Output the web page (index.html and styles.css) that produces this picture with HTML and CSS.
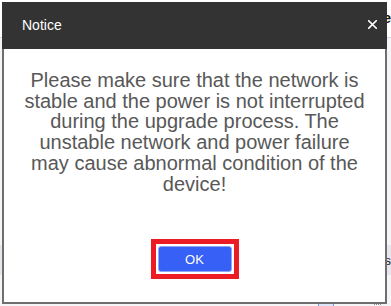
FILE: index.html
```html
<!DOCTYPE html>
<html lang="en">
<head>
<meta charset="utf-8">
<title>Notice</title>
<link rel="stylesheet" href="styles.css">
</head>
<body>
<div class="page">
  <div class="topbar"><span class="topbar-title">Firmware Upgrade</span></div>
  <div class="content">
    <div class="row-spacer"></div>
    <div class="row"><span class="row-text">Status</span></div>
    <div class="footer"><span class="foot-btn"></span><span class="foot-dots"><i></i><i></i><i></i><i></i></span></div>
  </div>
</div>

<div class="dialog" role="dialog">
  <div class="dialog-header">
    <span class="dialog-title">Notice</span>
    <svg class="close" width="9" height="9" viewBox="0 0 9 9"><path d="M0.7 0.7L8.3 8.3M8.3 0.7L0.7 8.3" stroke="#fff" stroke-width="1.6" stroke-linecap="square"/></svg>
  </div>
  <div class="dialog-body">
    <p class="msg">Please make sure that the network is<br>stable and the power is not interrupted<br>during the upgrade process. The<br>unstable network and power failure<br>may cause abnormal condition of the<br>device!</p>
    <div class="ok-frame"><button class="ok-btn">OK</button></div>
  </div>
</div>
</body>
</html>
```

FILE: styles.css
```css
html, body {
  margin: 0;
  padding: 0;
}
body {
  width: 391px;
  height: 306px;
  overflow: hidden;
  background: #ffffff;
  font-family: "Liberation Sans", Arial, sans-serif;
  position: relative;
}
.page {
  display: flex;
  flex-direction: column;
  height: 306px;
}
.topbar {
  height: 37px;
  border-bottom: 1px solid #d6d6dc;
  display: flex;
  justify-content: flex-end;
  align-items: center;
  background: #ffffff;
}
.topbar-title {
  font-weight: bold;
  font-size: 14px;
  color: #111;
  padding-bottom: 2px;
}
.content {
  flex: 1;
  display: flex;
  flex-direction: column;
  background: #f5f5f8;
}
.row-spacer {
  height: 207px;
}
.row {
  height: 30px;
  background: #e6e6ec;
  display: flex;
  justify-content: flex-end;
  align-items: center;
}
.row-text {
  font-size: 13px;
  color: #222;
}
.footer {
  flex: 1;
  display: flex;
  align-items: flex-end;
  justify-content: flex-end;
  padding-right: 10px;
  gap: 40px;
}
.foot-btn {
  width: 14px;
  height: 3px;
  border: 1px solid #7a9ad6;
  border-bottom: none;
  border-radius: 3px 3px 0 0;
  background: #dde6f8;
}
.foot-dots {
  display: flex;
  gap: 1px;
  margin-bottom: 1px;
}
.foot-dots i {
  width: 1px;
  height: 1px;
  background: #888;
}

.dialog {
  position: absolute;
  left: 2px;
  top: 2px;
  width: 385px;
  display: flex;
  flex-direction: column;
}
.dialog-header {
  height: 47px;
  background: #333333;
  display: flex;
  align-items: center;
  justify-content: space-between;
  padding: 0 10px 0 20px;
}
.dialog-title {
  color: #ffffff;
  font-size: 14px;
  margin-top: -2px;
}
.close {
  display: block;
  margin-top: -3px;
}
.dialog-body {
  height: 253px;
  background: #ffffff;
  border: 2px solid #6e6e6e;
  border-top: none;
  display: flex;
  flex-direction: column;
  align-items: center;
}
.msg {
  margin: 21px 0 0 0;
  text-align: center;
  white-space: nowrap;
  font-size: 20px;
  line-height: 20.7px;
  color: #585858;
}
.ok-frame {
  margin-top: 45px;
  border: 5px solid #ec1c24;
  padding: 2px;
  background: #ffffff;
  display: flex;
}
.ok-btn {
  width: 74px;
  height: 26px;
  background: #3660f6;
  border: 1px solid #8fa6f0;
  border-radius: 3px;
  color: #ffffff;
  font-family: "Liberation Sans", Arial, sans-serif;
  font-size: 13px;
  padding: 0;
  cursor: pointer;
}
```
